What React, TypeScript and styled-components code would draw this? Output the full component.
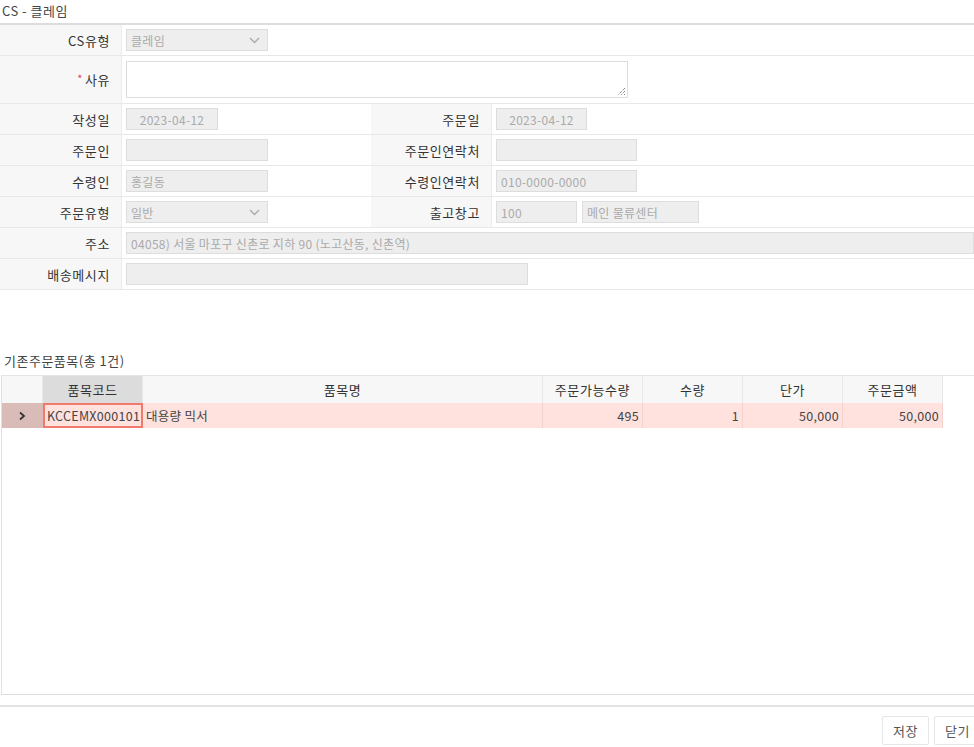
import React from "react";
import styled, { createGlobalStyle } from "styled-components";

const Global = createGlobalStyle`
  html, body { margin: 0; padding: 0; background: #fff; }
  body { font-family: "Noto Sans CJK KR", "Noto Sans", sans-serif; color: #333; }
  * { box-sizing: border-box; }
`;

const Page = styled.div`
  width: 974px;
  height: 747px;
  display: flex;
  flex-direction: column;
  overflow: hidden;
`;

const Title = styled.div`
  height: 25px;
  padding-left: 2px;
  font-size: 13px;
  font-weight: 400;
  letter-spacing: 0.5px;
  line-height: 22px;
  color: #444;
  border-bottom: 2px solid #ddd;
`;

const Form = styled.div`
  display: flex;
  flex-direction: column;
`;

const Row = styled.div<{ $h?: number }>`
  display: flex;
  height: ${(p) => p.$h ?? 31}px;
  border-bottom: 1px solid #e8e8e8;
`;

const Label = styled.div<{ $w: number }>`
  width: ${(p) => p.$w}px;
  flex: none;
  background: #f7f7f7;
  border-right: 1px solid #ececec;
  display: flex;
  align-items: center;
  justify-content: flex-end;
  padding-right: 11px;
  font-size: 13px;
  letter-spacing: 0.6px;
  color: #333;
`;

const Req = styled.span`
  color: #e0405a;
  font-size: 11px;
  margin-right: 2px;
  position: relative;
  top: -2px;
`;

const Cell = styled.div<{ $w?: number }>`
  ${(p) => (p.$w ? `width: ${p.$w}px; flex: none;` : "flex: 1;")}
  display: flex;
  align-items: center;
  gap: 5px;
  padding-left: 4px;
  min-width: 0;
`;

const Field = styled.div<{ $w?: number; $center?: boolean }>`
  ${(p) => (p.$w ? `width: ${p.$w}px;` : "flex: 1;")}
  height: 22px;
  background: #eee;
  border: 1px solid #ddd;
  font-size: 12px;
  letter-spacing: 0.3px;
  color: #aaa;
  display: flex;
  align-items: center;
  justify-content: ${(p) => (p.$center ? "center" : "space-between")};
  padding: 0 4px;
  white-space: nowrap;
  overflow: hidden;
`;

const Chevron = () => (
  <svg width="11" height="7" viewBox="0 0 11 7" style={{ marginRight: 3 }}>
    <path d="M1 1 L5.5 5.5 L10 1" stroke="#aaa" strokeWidth="1.4" fill="none" />
  </svg>
);

const TextArea = styled.div`
  width: 502px;
  height: 37px;
  border: 1px solid #ddd;
  background: #fff;
  position: relative;
`;

const Grip = styled.svg`
  position: absolute;
  right: 1px;
  bottom: 1px;
`;

const GridTitle = styled.div`
  margin-top: 60px;
  height: 25px;
  padding-left: 4px;
  font-size: 13px;
  font-weight: 400;
  letter-spacing: 0.5px;
  color: #444;
  line-height: 22px;
`;

const GridBox = styled.div`
  margin-left: 1px;
  height: 320px;
  border-top: 1px solid #e5e5e5;
  border-left: 1px solid #e0e0e0;
  border-bottom: 1px solid #ddd;
`;

const GridRow = styled.div<{ $h: number }>`
  display: grid;
  grid-template-columns: 41px 100px 400px repeat(4, 100px);
  height: ${(p) => p.$h}px;
`;

const HCell = styled.div<{ $sel?: boolean }>`
  background: ${(p) => (p.$sel ? "#dcdcdc" : "#f7f7f7")};
  border-right: 1px solid #e8e8e8;
  display: flex;
  align-items: center;
  justify-content: center;
  font-size: 13px;
  letter-spacing: 0.6px;
  color: #333;
`;

const DCell = styled.div<{ $align?: string; $focus?: boolean; $arrow?: boolean }>`
  background: ${(p) => (p.$arrow ? "#d9bcb8" : "#ffe1dd")};
  border-right: 1px solid ${(p) => (p.$arrow ? "#d9bcb8" : "#f3d2ce")};
  ${(p) => (p.$focus ? "border: 2px solid #f07a6c;" : "")}
  display: flex;
  align-items: center;
  justify-content: ${(p) => p.$align ?? "flex-start"};
  padding: 0 ${(p) => (p.$focus ? 2 : 3)}px;
  font-size: 12.5px;
  letter-spacing: 0.3px;
  color: #444;
  white-space: nowrap;
  overflow: hidden;
`;

const Footer = styled.div`
  margin-top: 10px;
  margin-right: -7px;
  border-top: 2px solid #e2e2e2;
  display: flex;
  justify-content: flex-end;
  gap: 5px;
  padding-top: 9px;
`;

const Button = styled.div`
  width: 47px;
  height: 29px;
  border: 1px solid #e6e6e6;
  border-radius: 2px;
  font-size: 13px;
  letter-spacing: 0.5px;
  color: #555;
  display: flex;
  align-items: center;
  justify-content: center;
  background: #fff;
`;

export default function App() {
  return (
    <Page>
      <Global />
      <Title>CS - 클레임</Title>
      <Form>
        <Row>
          <Label $w={122}>CS유형</Label>
          <Cell>
            <Field $w={142}>
              클레임
              <Chevron />
            </Field>
          </Cell>
        </Row>
        <Row $h={48}>
          <Label $w={122}>
            <Req>*</Req>사유
          </Label>
          <Cell>
            <TextArea>
              <Grip width="10" height="10" viewBox="0 0 10 10">
                <path d="M9 2 L2 9 M9 5 L5 9 M9 8 L8 9" stroke="#555" strokeWidth="1" strokeDasharray="1 1" />
              </Grip>
            </TextArea>
          </Cell>
        </Row>
        <Row>
          <Label $w={122}>작성일</Label>
          <Cell $w={249}>
            <Field $w={92} $center>2023-04-12</Field>
          </Cell>
          <Label $w={121}>주문일</Label>
          <Cell>
            <Field $w={91} $center>2023-04-12</Field>
          </Cell>
        </Row>
        <Row>
          <Label $w={122}>주문인</Label>
          <Cell $w={249}>
            <Field $w={142} />
          </Cell>
          <Label $w={121}>주문인연락처</Label>
          <Cell>
            <Field $w={141} />
          </Cell>
        </Row>
        <Row>
          <Label $w={122}>수령인</Label>
          <Cell $w={249}>
            <Field $w={142}>홍길동</Field>
          </Cell>
          <Label $w={121}>수령인연락처</Label>
          <Cell>
            <Field $w={141}>010-0000-0000</Field>
          </Cell>
        </Row>
        <Row>
          <Label $w={122}>주문유형</Label>
          <Cell $w={249}>
            <Field $w={142}>
              일반
              <Chevron />
            </Field>
          </Cell>
          <Label $w={121}>출고창고</Label>
          <Cell>
            <Field $w={81}>100</Field>
            <Field $w={117}>메인 물류센터</Field>
          </Cell>
        </Row>
        <Row>
          <Label $w={122}>주소</Label>
          <Cell>
            <Field>04058) 서울 마포구 신촌로 지하 90 (노고산동, 신촌역)</Field>
          </Cell>
        </Row>
        <Row>
          <Label $w={122}>배송메시지</Label>
          <Cell>
            <Field $w={402} />
          </Cell>
        </Row>
      </Form>
      <GridTitle>기존주문품목(총 1건)</GridTitle>
      <GridBox>
        <GridRow $h={27}>
          <HCell />
          <HCell $sel>품목코드</HCell>
          <HCell>품목명</HCell>
          <HCell>주문가능수량</HCell>
          <HCell>수량</HCell>
          <HCell>단가</HCell>
          <HCell>주문금액</HCell>
        </GridRow>
        <GridRow $h={25}>
          <DCell $arrow $align="center">
            <svg width="8" height="10" viewBox="0 0 8 10">
              <path d="M2 1.5 L6 5 L2 8.5" stroke="#333" strokeWidth="1.8" fill="none" />
            </svg>
          </DCell>
          <DCell $focus>KCCEMX000101I</DCell>
          <DCell>대용량 믹서</DCell>
          <DCell $align="flex-end">495</DCell>
          <DCell $align="flex-end">1</DCell>
          <DCell $align="flex-end">50,000</DCell>
          <DCell $align="flex-end">50,000</DCell>
        </GridRow>
      </GridBox>
      <Footer>
        <Button>저장</Button>
        <Button>닫기</Button>
      </Footer>
    </Page>
  );
}
